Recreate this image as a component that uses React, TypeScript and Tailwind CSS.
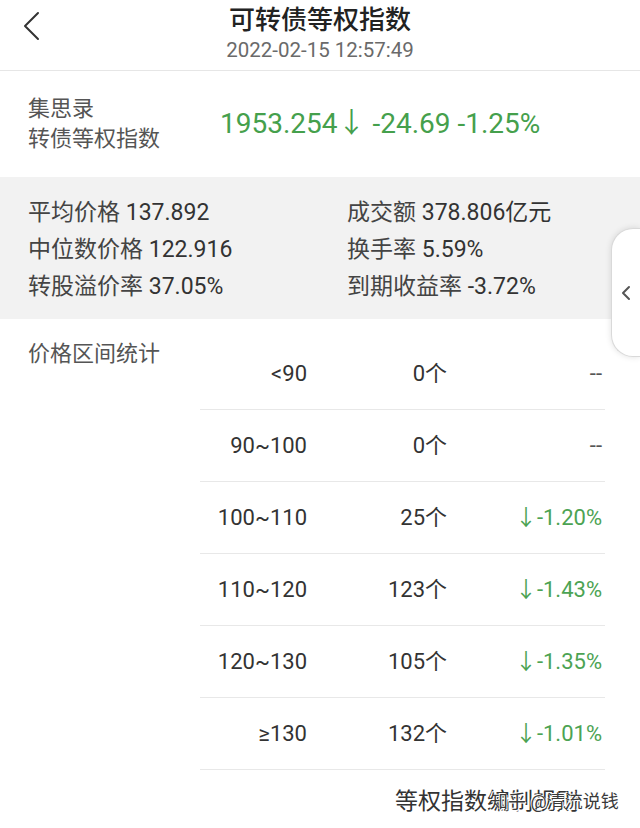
import React from "react";

type Row = {
    range: string;
    count: string;
    change: string;
    down?: boolean;
};

const rows: Row[] = [
    { range: "<90", count: "0个", change: "--" },
    { range: "90~100", count: "0个", change: "--" },
    { range: "100~110", count: "25个", change: "↓-1.20%", down: true },
    { range: "110~120", count: "123个", change: "↓-1.43%", down: true },
    { range: "120~130", count: "105个", change: "↓-1.35%", down: true },
    { range: "≥130", count: "132个", change: "↓-1.01%", down: true },
];

const stats = [
    ["平均价格", "137.892"],
    ["成交额", "378.806亿元"],
    ["中位数价格", "122.916"],
    ["换手率", "5.59%"],
    ["转股溢价率", "37.05%"],
    ["到期收益率", "-3.72%"],
];

export default function App() {
    return (
        <div className="relative h-[828px] w-[640px] overflow-hidden bg-white font-['Roboto','Noto_Sans_CJK_SC',sans-serif] text-[#333]">
            {/* header */}
            <div className="relative flex h-[71px] flex-col items-center border-b border-[#e6e6e6] pt-[5px]">
                <svg
                    className="absolute left-[20px] top-[11px]"
                    width="24"
                    height="30"
                    viewBox="0 0 24 30"
                    fill="none"
                    stroke="#333"
                    strokeWidth="2"
                    strokeLinecap="round"
                    strokeLinejoin="round"
                >
                    <polyline points="18,2 5,15 18,28" />
                </svg>
                <div className="text-[26px] font-medium leading-[30px] text-[#222]">可转债等权指数</div>
                <div className="text-[20.5px] leading-[30px] text-[#6a6a6a]">2022-02-15 12:57:49</div>
            </div>

            {/* index */}
            <div className="flex h-[106px] items-center pl-[28px]">
                <div className="w-[192px] text-[22px] leading-[30px] text-[#555]">
                    <div>集思录</div>
                    <div>转债等权指数</div>
                </div>
                <div className="text-[28px] leading-[34px] text-[#45a04c]">1953.254↓ -24.69 -1.25%</div>
            </div>

            {/* stats */}
            <div className="grid grid-cols-[319px_1fr] bg-[#f2f2f2] pb-[14px] pl-[28px] pt-[17px] text-[23px] leading-[37px]">
                {stats.map(([label, value]) => (
                    <div key={label}>
                        <span className="text-[#444]">{label}</span> {value}
                    </div>
                ))}
            </div>

            {/* price range */}
            <div className="flex">
                <div className="w-[200px] pl-[28px] pt-[20px] text-[22px] leading-[30px] text-[#555]">价格区间统计</div>
                <div className="w-[405px] pt-[19px]">
                    {rows.map((r) => (
                        <div
                            key={r.range}
                            className="grid h-[72px] grid-cols-[107px_140px_155px] items-center border-b border-[#e8e8e8] text-right text-[22px]"
                        >
                            <div>{r.range}</div>
                            <div>{r.count}</div>
                            <div className={r.down ? "text-[#4ca353]" : "text-[#555]"}>{r.change}</div>
                        </div>
                    ))}
                </div>
            </div>

            {/* footer link */}
            <div className="relative mt-[17px] pl-[395px] text-[23px] leading-[30px] text-[#333]">
                等权指数编制规则
                <span className="absolute left-[490px] top-[3px] whitespace-nowrap text-[18px] leading-[24px] text-[#3a3a3a] [text-shadow:1px_1px_0_#fff,-1px_-1px_0_#fff]">
                    知乎 @清流说钱
                </span>
            </div>

            {/* side tab */}
            <div className="absolute right-0 top-[228px] flex h-[129px] w-[29px] items-center justify-center rounded-l-[22px] border border-r-0 border-[#d9d9d9] bg-white shadow-[0_0_6px_rgba(0,0,0,0.12)]">
                <svg width="12" height="18" viewBox="0 0 12 18" fill="none" stroke="#555" strokeWidth="2" strokeLinecap="round" strokeLinejoin="round">
                    <polyline points="9,3 3,9 9,15" />
                </svg>
            </div>
        </div>
    );
}
